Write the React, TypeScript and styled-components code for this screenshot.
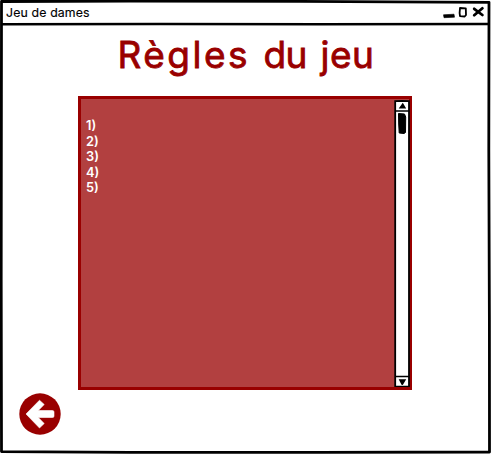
import React from "react";
import styled, { createGlobalStyle } from "styled-components";

const GlobalStyle = createGlobalStyle`
  * { box-sizing: border-box; }
  body { margin: 0; background: #fff; }
`;

const Window = styled.div`
  position: relative;
  display: flex;
  flex-direction: column;
  width: 491px;
  height: 454px;
  padding: 3px 3px 3px 3px;
  background: #fff;
  overflow: hidden;
`;

const Outline = styled.svg`
  position: absolute;
  inset: 0;
  pointer-events: none;
`;

const TitleBar = styled.header`
  display: flex;
  justify-content: space-between;
  flex: none;
  height: 20px;
  padding: 0 3px;
`;

const WindowTitle = styled.span`
  font: 12.3px/19px Inter, sans-serif;
  letter-spacing: 0.15px;
  color: #000;
  -webkit-text-stroke: 0.15px #000;
`;

const Content = styled.main`
  display: flex;
  flex-direction: column;
  align-items: center;
  padding-top: 7px;
`;

const Heading = styled.h1`
  margin: 0;
  height: 66px;
  padding-left: 1px;
  font: 400 37px/50px Inter, sans-serif;
  word-spacing: 3px;
  color: #990000;
  -webkit-text-stroke: 0.8px #990000;
  white-space: nowrap;
`;

const Word = styled.span<{ $tracking: number }>`
  letter-spacing: ${({ $tracking }) => $tracking}px;
`;

const RulesPanel = styled.section`
  display: flex;
  justify-content: space-between;
  width: 334px;
  height: 294px;
  margin-right: 1px;
  border: 3px solid #990000;
  background: #b24040;
`;

const RuleList = styled.ul`
  margin: 0;
  padding: 19px 0 0 5px;
  list-style: none;
  font: 600 12.8px/15.5px Inter, sans-serif;
  color: #fff;
`;

const BackButton = styled.button`
  align-self: flex-start;
  width: 42px;
  height: 42px;
  margin: 3px 0 0 16px;
  padding: 0;
  border: 0;
  background: none;
`;

const Icon = styled.svg`
  display: block;
  flex: none;
`;

const ScrollIcon = styled(Icon)`
  margin-right: -2px;
`;

const WindowControls = () => (
  <Icon width="44" height="18" viewBox="441 3 44 18">
    <path d="M443.5 14.8L454 14.2L454.5 17.2L444 17.7Z" fill="#000" stroke="#000" strokeLinejoin="round" strokeWidth=".6" />
    <path d="M460 8L465.8 8.3L466 15L464.7 16.5L460 16.2L459.6 13Z" fill="none" stroke="#000" strokeWidth="1.8" strokeLinejoin="round" />
    <path d="M474.2 8.8L482.4 15M482.4 8.3L474.2 15.2" stroke="#000" strokeWidth="2.8" strokeLinecap="round" />
  </Icon>
);

const ScrollBar = () => (
  <ScrollIcon width="17" height="288" viewBox="394 99 17 288">
    <path d="M395.2 101.2L402 100.8L409 101.2V386.6H395.2Z" fill="#fff" stroke="#000" strokeWidth="1.8" />
    <path d="M395 111H409M395 376.5H409" stroke="#000" strokeWidth="1.6" />
    <path d="M398.7 108.5L402.8 102.8L406.2 108.5ZM398.7 379.2H406.2L402.8 385L401.5 384.7Z" fill="#000" />
    <path d="M398.5 113.5L404.5 114L405.7 117L405.5 132.5L404 133.5L399.2 133L398.7 124Z" fill="#000" stroke="#000" strokeLinejoin="round" />
  </ScrollIcon>
);

const WindowOutline = () => (
  <Outline width="491" height="454" viewBox="0 0 491 454">
    <g fill="none" stroke="#000" strokeLinecap="round">
      <path d="M1.5 1.5L130 1L300 1.4L489 2.3L488.8 150L489.4 320L489.5 452L320 452.3L130 452.4L1.5 451.6L1.2 280Z" strokeWidth="2.8" strokeLinejoin="round" />
      <path d="M2 24.2L160 24L320 24.3L488 24.1" strokeWidth="2.5" />
    </g>
  </Outline>
);

export default function App() {
  return (
    <>
      <GlobalStyle />
      <Window>
        <TitleBar>
          <WindowTitle>Jeu de dames</WindowTitle>
          <WindowControls />
        </TitleBar>
        <Content>
          <Heading>
            <Word $tracking={2.5}>Règles</Word> <Word $tracking={-0.5}>du</Word> <Word $tracking={0.6}>jeu</Word>
          </Heading>
          <RulesPanel>
            <RuleList>
              {[1, 2, 3, 4, 5].map((n) => (
                <li key={n}>{n})</li>
              ))}
            </RuleList>
            <ScrollBar />
          </RulesPanel>
          <BackButton aria-label="Retour">
            <Icon width="42" height="42" viewBox="0 0 42 42">
              <circle cx="21" cy="21" r="20.7" fill="#990000" />
              <path d="M7 21L20.5 7.2L25.2 11.5L19.3 17.5H33.5Q35 17.5 35 19V23Q35 24.5 33.5 24.5H19.3L25.2 30.5L20.5 35Z" fill="#fff" stroke="#fff" strokeWidth=".6" strokeLinejoin="round" />
            </Icon>
          </BackButton>
        </Content>
        <WindowOutline />
      </Window>
    </>
  );
}
